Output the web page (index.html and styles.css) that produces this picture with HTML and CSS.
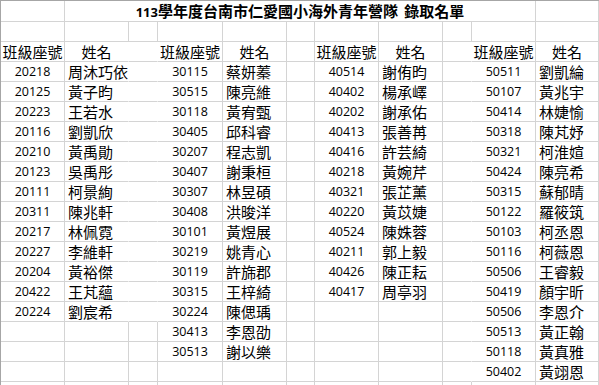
FILE: index.html
```html
<!DOCTYPE html>
<html lang="zh-Hant">

<head>
    <meta charset="UTF-8">
    <meta name="viewport" content="width=device-width, initial-scale=1.0">
    <title>113學年度台南市仁愛國小海外青年營隊 錄取名單</title>
    <link rel="stylesheet" href="styles.css">
</head>

<body>
    <div class="sheet">
        <!-- 標題列 -->
        <div class="row first">
            <div></div>
            <div class="title"><span class="digits">113</span>學年度台南市仁愛國小海外青年營隊 錄取名單</div>
            <div></div>
        </div>
        <div class="row">
            <div></div><div></div><div></div><div></div><div></div><div></div><div></div><div></div><div></div><div></div><div></div>
        </div>
        <!-- 欄位名稱 -->
        <div class="row">
            <div class="head">班級座號</div><div class="head open">姓名</div><div class="open"></div>
            <div class="head">班級座號</div><div class="head">姓名</div><div></div>
            <div class="head">班級座號</div><div class="head">姓名</div><div class="open"></div>
            <div class="head">班級座號</div><div class="head">姓名</div>
        </div>
        <!-- 名單 -->
        <div class="row">
            <div class="num">20218</div><div class="name open">周沐巧依</div><div class="open"></div>
            <div class="num">30115</div><div class="name">蔡妍蓁</div><div></div>
            <div class="num">40514</div><div class="name">謝侑昀</div><div class="open"></div>
            <div class="num">50511</div><div class="name">劉凱綸</div>
        </div>
        <div class="row">
            <div class="num">20125</div><div class="name open">黃子昀</div><div class="open"></div>
            <div class="num">30515</div><div class="name">陳亮維</div><div></div>
            <div class="num">40402</div><div class="name">楊承嶧</div><div class="open"></div>
            <div class="num">50107</div><div class="name">黃兆宇</div>
        </div>
        <div class="row">
            <div class="num">20223</div><div class="name open">王若水</div><div class="open"></div>
            <div class="num">30118</div><div class="name">黃宥甄</div><div></div>
            <div class="num">40202</div><div class="name">謝承佑</div><div class="open"></div>
            <div class="num">50414</div><div class="name">林婕愉</div>
        </div>
        <div class="row">
            <div class="num">20116</div><div class="name open">劉凱欣</div><div class="open"></div>
            <div class="num">30405</div><div class="name">邱科睿</div><div></div>
            <div class="num">40413</div><div class="name">張善苒</div><div class="open"></div>
            <div class="num">50318</div><div class="name">陳芃妤</div>
        </div>
        <div class="row">
            <div class="num">20210</div><div class="name open">黃禹勛</div><div class="open"></div>
            <div class="num">30207</div><div class="name">程志凱</div><div></div>
            <div class="num">40416</div><div class="name">許芸綺</div><div class="open"></div>
            <div class="num">50321</div><div class="name">柯淮媗</div>
        </div>
        <div class="row">
            <div class="num">20123</div><div class="name open">吳禹彤</div><div class="open"></div>
            <div class="num">30407</div><div class="name">謝秉桓</div><div></div>
            <div class="num">40218</div><div class="name">黃婉芹</div><div class="open"></div>
            <div class="num">50424</div><div class="name">陳亮希</div>
        </div>
        <div class="row">
            <div class="num">20111</div><div class="name open">柯景絢</div><div class="open"></div>
            <div class="num">30307</div><div class="name">林昱碩</div><div></div>
            <div class="num">40321</div><div class="name">張芷薰</div><div class="open"></div>
            <div class="num">50315</div><div class="name">蘇郁晴</div>
        </div>
        <div class="row">
            <div class="num">20311</div><div class="name open">陳兆軒</div><div class="open"></div>
            <div class="num">30408</div><div class="name">洪晙洋</div><div></div>
            <div class="num">40220</div><div class="name">黃苡婕</div><div class="open"></div>
            <div class="num">50122</div><div class="name">羅筱筑</div>
        </div>
        <div class="row">
            <div class="num">20217</div><div class="name open">林佩霓</div><div class="open"></div>
            <div class="num">30101</div><div class="name">黃煜展</div><div></div>
            <div class="num">40524</div><div class="name">陳姝蓉</div><div class="open"></div>
            <div class="num">50103</div><div class="name">柯丞恩</div>
        </div>
        <div class="row">
            <div class="num">20227</div><div class="name open">李維軒</div><div class="open"></div>
            <div class="num">30219</div><div class="name">姚青心</div><div></div>
            <div class="num">40211</div><div class="name">郭上毅</div><div class="open"></div>
            <div class="num">50116</div><div class="name">柯薇恩</div>
        </div>
        <div class="row">
            <div class="num">20204</div><div class="name open">黃裕傑</div><div class="open"></div>
            <div class="num">30119</div><div class="name">許旆郡</div><div></div>
            <div class="num">40426</div><div class="name">陳正耘</div><div class="open"></div>
            <div class="num">50506</div><div class="name">王睿毅</div>
        </div>
        <div class="row">
            <div class="num">20422</div><div class="name open">王芃蘊</div><div class="open"></div>
            <div class="num">30315</div><div class="name">王梓綺</div><div></div>
            <div class="num">40417</div><div class="name">周亭羽</div><div class="open"></div>
            <div class="num">50419</div><div class="name">顏宇昕</div>
        </div>
        <div class="row">
            <div class="num">20224</div><div class="name open">劉宸希</div><div class="open"></div>
            <div class="num">30224</div><div class="name">陳偲瑀</div><div></div>
            <div></div><div></div><div class="open"></div>
            <div class="num">50506</div><div class="name">李恩介</div>
        </div>
        <div class="row">
            <div></div><div></div><div></div>
            <div class="num">30413</div><div class="name">李恩劭</div><div></div>
            <div></div><div></div><div class="open"></div>
            <div class="num">50513</div><div class="name">黃正翰</div>
        </div>
        <div class="row">
            <div></div><div></div><div></div>
            <div class="num">30513</div><div class="name">謝以樂</div><div></div>
            <div></div><div></div><div class="open"></div>
            <div class="num">50118</div><div class="name">黃真雅</div>
        </div>
        <div class="row">
            <div></div><div></div><div></div>
            <div></div><div></div><div></div>
            <div></div><div></div><div class="open"></div>
            <div class="num">50402</div><div class="name">黃翊恩</div>
        </div>
        <div class="row">
            <div></div><div></div><div></div><div></div><div></div><div></div><div></div><div></div><div></div><div></div><div></div>
        </div>
    </div>
</body>

</html>
```

FILE: styles.css
```css
body {
    margin: 0;
    background: #fff;
    overflow: hidden;
}

.sheet {
    width: 599px;
    height: 385px;
    box-sizing: border-box;
    overflow: hidden;
    border-top: 1px solid #a6a6a6;
    border-left: 1px solid #a6a6a6;
    font-family: "Noto Sans CJK TC", "Noto Sans", sans-serif;
    color: #000;
}

/* 每一列都是同樣的欄寬，最後一欄只露出一部分 */
.row {
    display: grid;
    grid-template-columns: 64px 64px 29px 65px 64px 28px 64px 64px 29px 64px 63px;
    height: 20px;
}

.row.first {
    height: 21px;
}

.row > div {
    box-sizing: border-box;
    border-right: 1px solid #d4d4d4;
    border-bottom: 1px solid #d4d4d4;
    line-height: 19px;
    font-size: 15px;
    white-space: nowrap;
    overflow: hidden;
}

/* 格線被蓋掉的儲存格 */
.row > .open {
    border-right-color: transparent;
}

.title {
    grid-column: span 9;
    text-align: center;
    font-weight: bold;
    word-spacing: 3px;
    line-height: 20px !important;
}

.digits {
    font-family: "Open Sans", sans-serif;
    font-size: 13px;
}

.head {
    text-align: center;
}

.num {
    text-align: center;
    font-family: "Open Sans", sans-serif;
    font-size: 12.5px !important;
}

.name {
    padding-left: 3px;
}
```
